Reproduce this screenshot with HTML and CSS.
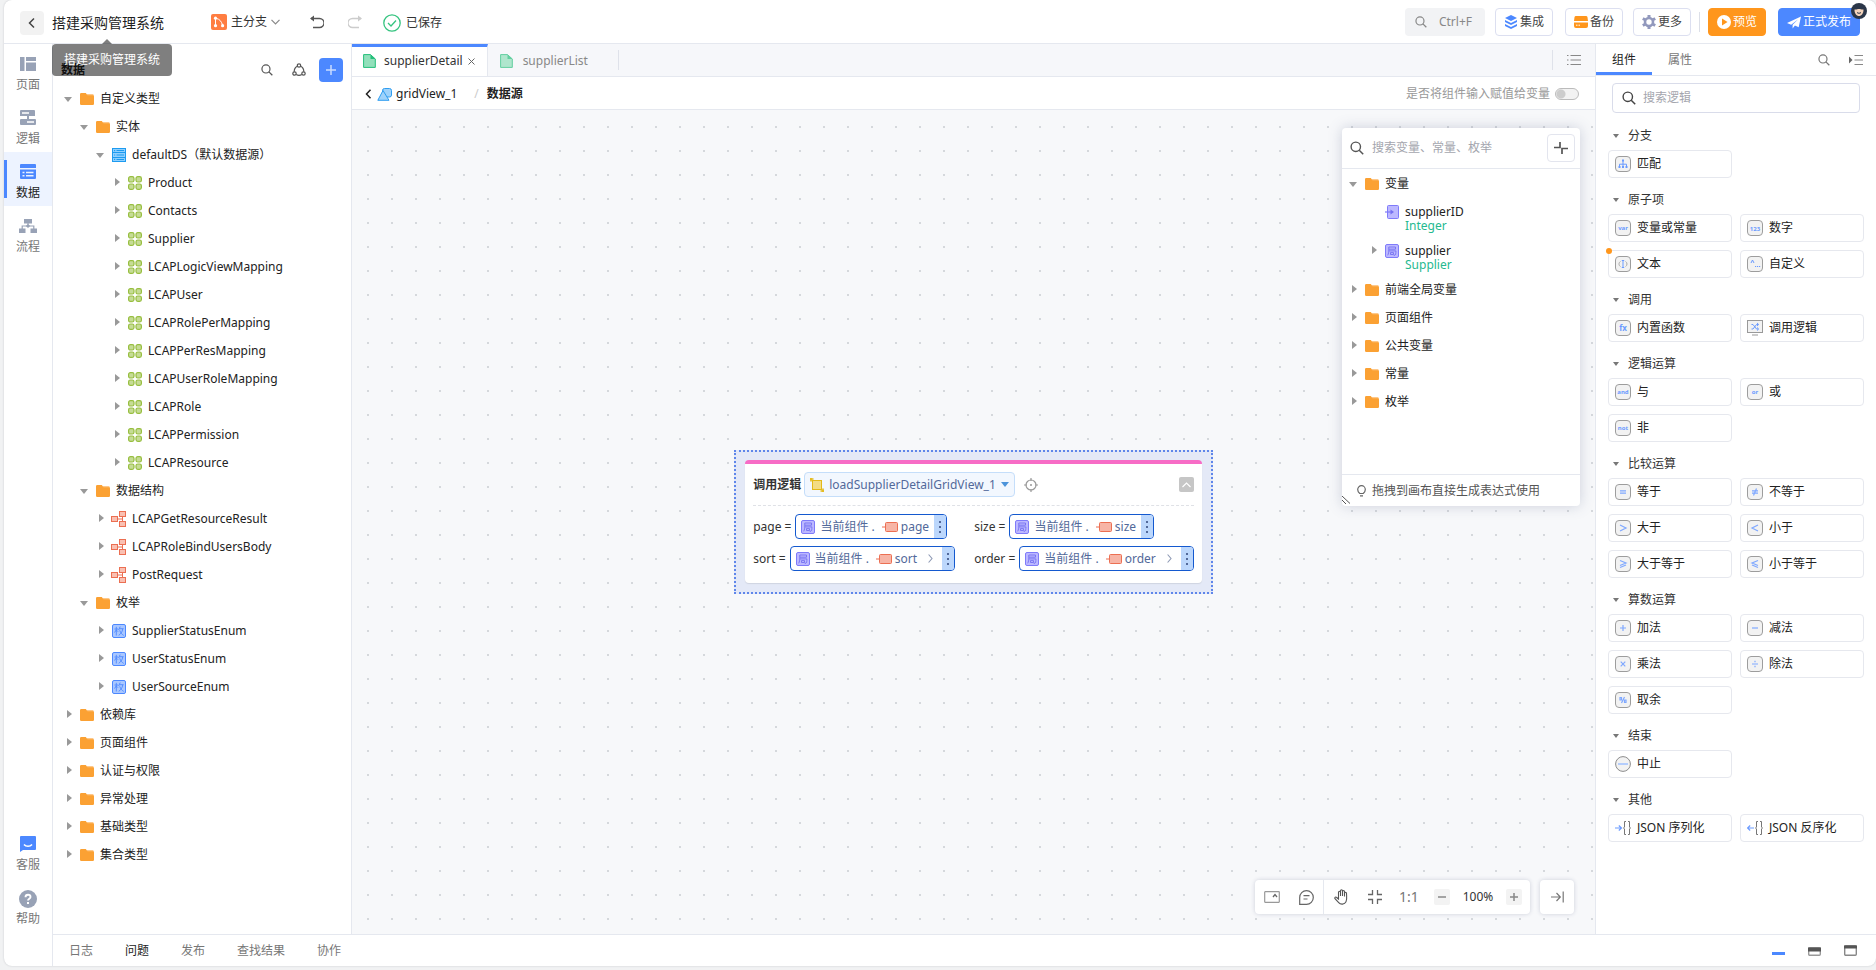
FILE: index.html
```html
<!DOCTYPE html>
<html lang="zh-CN">
<head>
<meta charset="utf-8">
<title>搭建采购管理系统</title>
<link rel="stylesheet" href="styles.css">
</head>
<body>
<svg class="defs" aria-hidden="true">
  <symbol id="folder" viewBox="0 0 14 14"><path d="M7 2h5.500a1.200 1.200 0 0 1 1.200 1.200V6H7z" fill="#fdc88a"/><path d="M0 2.200A1.200 1.200 0 0 1 1.200 1h4.600l1.700 2.200h5.300A1.200 1.200 0 0 1 14 4.400v7.400a1.200 1.200 0 0 1-1.200 1.200H1.200A1.200 1.200 0 0 1 0 11.800z" fill="#fba133"/></symbol>
  <symbol id="db" viewBox="0 0 14 14"><path d="M0 0h14v14H0z" fill="#8fd0ff"/><path d="M0 .5h14M0 4.500h14M0 9.500h14M0 13.500h14" stroke="#1d9bf0" stroke-width="1.200" fill="none"/><path d="M.5 0v14M13.500 0v14M4.500 2.500H12M4.500 7H12M4.500 11.500H12" stroke="#1d9bf0" fill="none"/><path d="M2 2h1.200v1.200H2zM2 6.400h1.200v1.200H2zM2 10.800h1.200V12H2z" fill="#1d9bf0"/></symbol>
  <symbol id="entity" viewBox="0 0 14 14"><g fill="#c6dc96" stroke="#97be3f" stroke-width="1.200"><rect x=".6" y=".6" width="5.400" height="5.400" rx="1.800"/><rect x="8" y=".6" width="5.400" height="5.400" rx="1.800"/><rect x=".6" y="8" width="5.400" height="5.400" rx="1.800"/><rect x="8" y="8" width="5.400" height="5.400" rx="1.800"/></g></symbol>
  <symbol id="struct" viewBox="0 0 16 16"><g fill="#f9c0b2" stroke="#ec6f52"><rect x=".5" y="5.500" width="6" height="5"/><rect x="8.500" y=".5" width="6" height="5"/><rect x="8.500" y="10.500" width="6" height="5"/><path d="M7 8h4.500M11.500 6v4" fill="none"/></g></symbol>
  <symbol id="enum" viewBox="0 0 14 14"><rect x=".5" y=".5" width="13" height="13" rx="1.500" fill="#a9c7ff" stroke="#4c88ff"/><path d="M2.500 5h3.500M4.300 2.800v8.700M4.200 6l-1.700 2.500M4.500 6.200L6 7.700M8.200 2.600L6.600 6M7.600 4.700h4M10.700 5c-.4 3-1.900 5-4 6.300M7.700 6.300c.8 2.300 2.200 4.200 4 5.100" fill="none" stroke="#4c88ff" stroke-width=".9"/></symbol>
  <symbol id="local" viewBox="0 0 14 14"><rect x=".5" y=".5" width="13" height="13" rx="1.500" fill="#bcb8ff" stroke="#7f7bfa"/><path d="M3.800 3h6.700v2.200H3.800zM3.800 5.200C3.800 8 3.500 10 2.700 11.300M4 6.900h6.900c0 2.500-.2 4-.9 4.300H8.700M5.500 8.600h3v1.900h-3z" fill="none" stroke="#7471f0" stroke-width=".9"/></symbol>
  <symbol id="input" viewBox="0 0 14 14"><rect x="2.500" y=".5" width="11" height="13" rx="1" fill="#bcb8ff" stroke="#7f7bfa"/><path d="M0 7h6" stroke="#7f7bfa" stroke-width="1.200"/><path d="M5.500 4.500L9 7 5.500 9.500z" fill="#7471f0"/></symbol>
  <symbol id="attr" viewBox="0 0 16 12"><path d="M0 6h4" stroke="#ec6f52"/><rect x="3.500" y="1.500" width="12" height="9" rx="1" fill="#f7b5a6" stroke="#ec6f52"/></symbol>
  <symbol id="file" viewBox="0 0 13 14"><path d="M1 .6h6.500L12.300 5v8.400H.6V.6z" fill="#92e0bb" stroke="#25bf7b"/><path d="M7.500.5V5h5z" fill="#25bf7b"/></symbol>
  <symbol id="search" viewBox="0 0 14 14"><circle cx="5.800" cy="5.800" r="4.700" fill="none" stroke="currentColor" stroke-width="1.400"/><path d="M9.200 9.200l4 4" stroke="currentColor" stroke-width="1.500"/></symbol>
  <symbol id="key" viewBox="0 0 16 16"><rect x=".5" y=".5" width="15" height="15" rx="3.500" fill="#f2f2f2" stroke="#9d9d9d"/></symbol>
</svg>

<div class="app">
  <header class="top">
    <button class="back" aria-label="返回"><svg width="8" height="12" viewBox="0 0 8 12"><path d="M6 1.500L1.500 6 6 10.500" fill="none" stroke="#444" stroke-width="1.500"/></svg></button>
    <h1 class="title">搭建采购管理系统<span class="tip" role="tooltip">搭建采购管理系统</span></h1>
    <button class="branch">
      <svg width="16" height="16" viewBox="0 0 16 16"><rect width="16" height="16" rx="2" fill="#ff7d41"/><path d="M4.500 4.500v7M4.500 4.500h1c3 .5 5 3 6 6.500" fill="none" stroke="#fff"/><g fill="#fff"><circle cx="4.500" cy="4.200" r="1.600"/><circle cx="4.500" cy="11.700" r="1.600"/><circle cx="11.600" cy="11.700" r="1.600"/></g></svg>
      主分支
      <svg width="9" height="6" viewBox="0 0 9 6"><path d="M.5.8l4 4 4-4" fill="none" stroke="#888" stroke-width="1.200"/></svg>
    </button>
    <div class="history">
      <button aria-label="撤销"><svg width="14" height="14" viewBox="0 0 14 14"><path d="M1 3.500h8.500a4.500 4.500 0 0 1 0 9H3" fill="none" stroke="#555" stroke-width="1.300"/><path d="M4 .5v6L0 3.500z" fill="#555"/></svg></button>
      <button aria-label="重做"><svg width="14" height="14" viewBox="0 0 14 14"><path d="M13 3.500H4.500a4.500 4.500 0 0 0 0 9H11" fill="none" stroke="#ccc" stroke-width="1.300"/><path d="M10 .5v6l4-3z" fill="#ccc"/></svg></button>
    </div>
    <p class="saved"><svg width="18" height="18" viewBox="0 0 18 18"><circle cx="9" cy="9" r="8.200" fill="none" stroke="#36c480" stroke-width="1.300"/><path d="M5 9l3 3 5-5.500" fill="none" stroke="#36c480" stroke-width="1.300"/></svg>已保存</p>
    <div class="actions">
      <button class="find"><svg width="12" height="12"><use href="#search"/></svg>Ctrl+F</button>
      <button class="act wide"><svg width="14" height="14" viewBox="0 0 14 14"><g fill="#4c88ff"><path d="M7 0l6 3-6 3-6-3z"/><path d="M1 5l6 3 6-3v2L7 10 1 7z"/><path d="M1 9l6 3 6-3v2l-6 3-6-3z"/></g></svg>集成</button>
      <button class="act"><svg width="14" height="14" viewBox="0 0 14 14"><path d="M2 1h10a1.500 1.500 0 0 1 1.500 1.200L14 6H0l.5-3.800A1.500 1.500 0 0 1 2 1zM0 7.500h14V11a2 2 0 0 1-2 2H2a2 2 0 0 1-2-2z" fill="#ff961c"/><path d="M2 10.200h1.500M4.500 10.200H6" stroke="#fff"/></svg>备份</button>
      <button class="act"><svg width="14" height="14" viewBox="0 0 14 14"><circle cx="7" cy="7" r="4" fill="none" stroke="#9299bd" stroke-width="2.600"/><g stroke="#9299bd" stroke-width="3"><path d="M7 0v2.500M7 11.500V14M.8 3.500L3 4.700M11 9.300l2.200 1.200M.8 10.500L3 9.300M11 4.700l2.200-1.200"/></g></svg>更多</button>
      <span class="bar"></span>
      <button class="act preview"><svg width="14" height="14" viewBox="0 0 14 14"><circle cx="7" cy="7" r="7" fill="#fff"/><path d="M5 3.500L10.500 7 5 10.500z" fill="#ff961c"/></svg>预览</button>
      <button class="act publish"><svg width="14" height="13" viewBox="0 0 15 13"><path d="M0 7L15 0l-2.500 11.500-4-1.700L6 13v-4L12 3 4.500 8.800z" fill="#fff"/></svg>正式发布
        <svg class="avatar" width="16" height="16" viewBox="0 0 16 16"><circle cx="8" cy="8" r="8" fill="#2b3648"/><path d="M3.500 6.500c2 .3 3-.6 4.500-.6s2.500.9 4.500.6C12.600 10.500 10.500 13 8 13s-4.600-2.500-4.500-6.500z" fill="#f3d3bb"/><path d="M6 9.500c1.200 1 2.800 1 4 0" stroke="#2b3648" fill="none"/></svg>
      </button>
    </div>
  </header>

  <div class="main">
    <nav class="rail">
      <button><svg width="16" height="16" viewBox="0 0 16 16"><path d="M0 1h4.500v14H0zM6 1h10v4H6zM6 6.500h10V15H6z" fill="#98a2b6"/></svg>页面</button>
      <button><svg width="18" height="16" viewBox="0 0 18 16"><path d="M2 0h13a1 1 0 0 1 1 1v5H1V1a1 1 0 0 1 1-1zM2 9h14a1 1 0 0 1 1 1v4a1 1 0 0 1-1 1H2a1 1 0 0 1-1-1v-4a1 1 0 0 1 1-1z" fill="#98a2b6"/><path d="M3 3h7M8 12h7" stroke="#fff" stroke-width="1.500"/><path d="M9 6v3" stroke="#98a2b6" stroke-width="2"/></svg>逻辑</button>
      <button class="on"><svg width="16" height="16" viewBox="0 0 16 16"><path d="M1 0h14a1 1 0 0 1 1 1v3H0V1a1 1 0 0 1 1-1zM0 5.500h16V14a1 1 0 0 1-1 1H1a1 1 0 0 1-1-1z" fill="#4c88ff"/><path d="M2.500 8.500h2M6 8.500h7.500M2.500 11.800h2M6 11.800h7.500" stroke="#eaf1ff" stroke-width="1.600"/></svg>数据</button>
      <button><svg width="18" height="16" viewBox="0 0 18 16"><path d="M5 1h8v4.500H5zM0 10.500h6.500V15H0zM11.500 10.500H18V15h-6.500z" fill="#98a2b6"/><path d="M9 5v4M3.200 11V8h11.600v3" fill="none" stroke="#98a2b6" stroke-width="1.200"/><path d="M9 6l2.200 2L9 10 6.800 8z" fill="#98a2b6"/></svg>流程</button>
      <span class="grow"></span>
      <button><svg width="16" height="16" viewBox="0 0 16 16"><path d="M1 0h14a1 1 0 0 1 1 1v12a1 1 0 0 1-1 1H3l-3 2V1a1 1 0 0 1 1-1z" fill="#4c88ff"/><path d="M4 8.500c2 2.400 6 2.400 8 0" fill="none" stroke="#fff" stroke-width="1.600"/></svg>客服</button>
      <button><svg width="18" height="18" viewBox="0 0 18 18"><circle cx="9" cy="9" r="9" fill="#98a2b6"/><path d="M6.500 7.200C6.500 3.800 11.500 4 11.500 7c0 1.700-2.500 1.800-2.500 3.600" fill="none" stroke="#fff" stroke-width="1.900"/><path d="M8 12h2v2H8z" fill="#fff"/></svg>帮助</button>
    </nav>

    <div class="work">
      <div class="cols">
        <aside class="tree-panel">
          <div class="tree-head">
            <h2>数据</h2>
            <button aria-label="搜索"><svg width="12" height="12"><use href="#search"/></svg></button>
            <button aria-label="引用关系"><svg width="14" height="14" viewBox="0 0 14 14"><g fill="none" stroke="#555" stroke-width="1.200"><circle cx="7" cy="2.500" r="1.700"/><circle cx="2.500" cy="10.500" r="1.700"/><circle cx="11.500" cy="10.500" r="1.700"/><path d="M5.300 3.200C3.300 4.200 2.200 6 2.200 8.700M8.700 3.200c2 1 3.100 2.800 3.100 5.500M4.200 11.500c1.700 1 3.900 1 5.600 0"/></g></svg></button>
            <button class="add" aria-label="新增"><svg width="10" height="10" viewBox="0 0 10 10"><path d="M5 0v10M0 5h10" stroke="#c9dbff" stroke-width="1.500"/></svg></button>
          </div>
          <div class="tree">
            <button class="node l0"><i class="open"></i><svg><use href="#folder"/></svg>自定义类型</button>
            <button class="node l1"><i class="open"></i><svg><use href="#folder"/></svg>实体</button>
            <button class="node l2"><i class="open"></i><svg><use href="#db"/></svg>defaultDS（默认数据源）</button>
            <button class="node l3"><i class="shut"></i><svg><use href="#entity"/></svg>Product</button>
            <button class="node l3"><i class="shut"></i><svg><use href="#entity"/></svg>Contacts</button>
            <button class="node l3"><i class="shut"></i><svg><use href="#entity"/></svg>Supplier</button>
            <button class="node l3"><i class="shut"></i><svg><use href="#entity"/></svg>LCAPLogicViewMapping</button>
            <button class="node l3"><i class="shut"></i><svg><use href="#entity"/></svg>LCAPUser</button>
            <button class="node l3"><i class="shut"></i><svg><use href="#entity"/></svg>LCAPRolePerMapping</button>
            <button class="node l3"><i class="shut"></i><svg><use href="#entity"/></svg>LCAPPerResMapping</button>
            <button class="node l3"><i class="shut"></i><svg><use href="#entity"/></svg>LCAPUserRoleMapping</button>
            <button class="node l3"><i class="shut"></i><svg><use href="#entity"/></svg>LCAPRole</button>
            <button class="node l3"><i class="shut"></i><svg><use href="#entity"/></svg>LCAPPermission</button>
            <button class="node l3"><i class="shut"></i><svg><use href="#entity"/></svg>LCAPResource</button>
            <button class="node l1"><i class="open"></i><svg><use href="#folder"/></svg>数据结构</button>
            <button class="node l2"><i class="shut"></i><svg class="tall"><use href="#struct"/></svg>LCAPGetResourceResult</button>
            <button class="node l2"><i class="shut"></i><svg class="tall"><use href="#struct"/></svg>LCAPRoleBindUsersBody</button>
            <button class="node l2"><i class="shut"></i><svg class="tall"><use href="#struct"/></svg>PostRequest</button>
            <button class="node l1"><i class="open"></i><svg><use href="#folder"/></svg>枚举</button>
            <button class="node l2"><i class="shut"></i><svg><use href="#enum"/></svg>SupplierStatusEnum</button>
            <button class="node l2"><i class="shut"></i><svg><use href="#enum"/></svg>UserStatusEnum</button>
            <button class="node l2"><i class="shut"></i><svg><use href="#enum"/></svg>UserSourceEnum</button>
            <button class="node l0"><i class="shut"></i><svg><use href="#folder"/></svg>依赖库</button>
            <button class="node l0"><i class="shut"></i><svg><use href="#folder"/></svg>页面组件</button>
            <button class="node l0"><i class="shut"></i><svg><use href="#folder"/></svg>认证与权限</button>
            <button class="node l0"><i class="shut"></i><svg><use href="#folder"/></svg>异常处理</button>
            <button class="node l0"><i class="shut"></i><svg><use href="#folder"/></svg>基础类型</button>
            <button class="node l0"><i class="shut"></i><svg><use href="#folder"/></svg>集合类型</button>
          </div>
        </aside>

        <main class="editor">
          <div class="tabs">
            <button class="tab current"><svg width="13" height="14"><use href="#file"/></svg><span>supplierDetail</span><svg class="close" width="7" height="7" viewBox="0 0 7 7"><path d="M.5.5l6 6M6.500.5l-6 6" stroke="#666"/></svg></button>
            <button class="tab"><svg width="13" height="14"><use href="#file"/></svg><span>supplierList</span></button>
            <span class="sep"></span>
            <span class="grow"></span>
            <span class="sep"></span>
            <button class="list" aria-label="标签列表"><svg width="14" height="12" viewBox="0 0 14 12"><path d="M3.500 1.500H14M3.500 6H14M3.500 10.500H14M0 1.500h1.500M0 6h1.500M0 10.500h1.500" stroke="#888" stroke-width="1.200"/></svg></button>
          </div>
          <div class="crumbs">
            <button aria-label="返回"><svg width="7" height="10" viewBox="0 0 7 10"><path d="M5.500.8L1.500 5l4 4.200" fill="none" stroke="#222" stroke-width="1.500"/></svg></button>
            <a href="#grid"><svg width="15" height="14" viewBox="0 0 15 14"><rect x="5.500" y="1.500" width="9" height="8.500" rx="2" fill="#9ed2fb" stroke="#2f9df0"/><path d="M6 3.500L12 13.300H.8z" fill="#9ed2fb" stroke="#2f9df0"/></svg>gridView_1</a>
            <span class="slash">/</span>
            <strong>数据源</strong>
            <label class="assign">是否将组件输入赋值给变量<input type="checkbox" role="switch"></label>
          </div>
          <div class="canvas">
            <section class="block">
              <div class="card">
                <div class="card-head">
                  <strong>调用逻辑</strong>
                  <button class="pick"><svg width="14" height="14" viewBox="0 0 14 14"><rect x="2.500" y="2.500" width="9" height="9" fill="#f3dc84" stroke="#e3b919"/><path d="M0 1h3.500M1 0v3.500M10.500 13H14M13 10.500V14" stroke="#e3b919" stroke-width="1.600"/></svg>loadSupplierDetailGridView_1<i class="drop"></i></button>
                  <button aria-label="定位"><svg width="14" height="14" viewBox="0 0 14 14"><circle cx="7" cy="7" r="5" fill="none" stroke="#999" stroke-width="1.200"/><path d="M7 0v3M7 11v3M0 7h3M11 7h3" stroke="#999" stroke-width="1.200"/><circle cx="7" cy="7" r="1" fill="#999"/></svg></button>
                  <button class="fold" aria-label="收起"><svg width="9" height="6" viewBox="0 0 9 6"><path d="M.5 5l4-4 4 4" fill="none" stroke="#fff" stroke-width="1.200"/></svg></button>
                </div>
                <div class="params">
                  <div class="param">page = <button class="pill"><svg width="14" height="14"><use href="#local"/></svg><span>当前组件 .</span><svg width="16" height="12"><use href="#attr"/></svg><b>page</b><em></em></button></div>
                  <div class="param">size = <button class="pill"><svg width="14" height="14"><use href="#local"/></svg><span>当前组件 .</span><svg width="16" height="12"><use href="#attr"/></svg><b>size</b><em></em></button></div>
                  <div class="param">sort = <button class="pill"><svg width="14" height="14"><use href="#local"/></svg><span>当前组件 .</span><svg width="16" height="12"><use href="#attr"/></svg><b>sort</b><svg class="next" width="5" height="9" viewBox="0 0 5 9"><path d="M.6.5l3.400 4-3.400 4" fill="none" stroke="#8e9ab5" stroke-width="1.100"/></svg><em></em></button></div>
                  <div class="param">order = <button class="pill"><svg width="14" height="14"><use href="#local"/></svg><span>当前组件 .</span><svg width="16" height="12"><use href="#attr"/></svg><b>order</b><svg class="next" width="5" height="9" viewBox="0 0 5 9"><path d="M.6.5l3.400 4-3.400 4" fill="none" stroke="#8e9ab5" stroke-width="1.100"/></svg><em></em></button></div>
                </div>
              </div>
            </section>

            <section class="vars">
              <div class="vars-head">
                <svg width="14" height="14"><use href="#search"/></svg>
                <input type="text" aria-label="搜索变量" placeholder="搜索变量、常量、枚举">
                <button aria-label="收缩"><svg width="14" height="14" viewBox="0 0 14 14"><path d="M0 6.500h6V1M8 13V7.500h6" fill="none" stroke="#555" stroke-width="1.700"/></svg></button>
              </div>
              <div class="vars-tree">
                <button class="node"><i class="open"></i><svg><use href="#folder"/></svg>变量</button>
                <button class="node two"><i></i><svg><use href="#input"/></svg><span>supplierID<small>Integer</small></span></button>
                <button class="node two"><i class="shut"></i><svg><use href="#local"/></svg><span>supplier<small>Supplier</small></span></button>
                <button class="node"><i class="shut"></i><svg><use href="#folder"/></svg>前端全局变量</button>
                <button class="node"><i class="shut"></i><svg><use href="#folder"/></svg>页面组件</button>
                <button class="node"><i class="shut"></i><svg><use href="#folder"/></svg>公共变量</button>
                <button class="node"><i class="shut"></i><svg><use href="#folder"/></svg>常量</button>
                <button class="node"><i class="shut"></i><svg><use href="#folder"/></svg>枚举</button>
              </div>
              <p class="vars-foot"><svg width="9" height="12" viewBox="0 0 9 12"><path d="M2.800 8.500C1.500 7.500.7 6.500.7 4.500a3.800 3.800 0 0 1 7.600 0c0 2-.8 3-2.100 4zM3 10.800h3" fill="none" stroke="#666" stroke-width="1.200"/></svg>拖拽到画布直接生成表达式使用</p>
              <svg class="grip" width="8" height="8" viewBox="0 0 8 8"><path d="M0 0l8 7.500M0 4l4 4" stroke="#555"/></svg>
            </section>

            <div class="tools">
              <div class="tool-group">
                <button aria-label="缩略图"><svg width="16" height="12" viewBox="0 0 16 12"><rect x=".7" y=".7" width="14.600" height="10.600" rx=".5" fill="none" stroke="#999" stroke-width="1.200"/><path d="M9 6l2-2.500L13 6" fill="none" stroke="#666" stroke-width="1.300"/></svg></button>
                <button class="split" aria-label="评论"><svg width="15" height="15" viewBox="0 0 15 15"><path d="M.7 14.300V7.500A6.800 6.800 0 1 1 7.500 14.300zM4.500 5.700h6M4.500 9h4" fill="none" stroke="#666" stroke-width="1.200"/></svg></button>
                <button aria-label="拖动"><svg width="15" height="16" viewBox="0 0 15 16"><path d="M4.500 10V3.300a1 1 0 0 1 2 0V7 1.700a1 1 0 0 1 2 0V7 2.500a1 1 0 0 1 2 0v5-3.200a1 1 0 0 1 2 0c0 3 .8 6-.5 8.500-1.400 2.900-5.500 3-7.300.8L1 9.700c-.8-1.500.9-2.100 1.700-1.200z" fill="none" stroke="#555" stroke-width="1.100"/></svg></button>
                <button aria-label="适应画布"><svg width="14" height="14" viewBox="0 0 14 14"><path d="M0 4.500h4.500V0M9.500 0v4.500H14M0 9.500h4.500V14M9.500 14V9.500H14" fill="none" stroke="#666" stroke-width="1.300"/></svg></button>
                <button class="ratio">1:1</button>
                <button class="step" aria-label="缩小"><svg width="8" height="8" viewBox="0 0 8 8"><path d="M0 4h8" stroke="#888" stroke-width="1.500"/></svg></button>
                <output>100%</output>
                <button class="step" aria-label="放大"><svg width="8" height="8" viewBox="0 0 8 8"><path d="M0 4h8M4 0v8" stroke="#888" stroke-width="1.500"/></svg></button>
              </div>
              <div class="tool-group">
                <button aria-label="收起工具"><svg width="13" height="12" viewBox="0 0 13 12"><path d="M0 6h9M5.500 2L9.300 6l-3.800 4M12.200.5v11" fill="none" stroke="#777" stroke-width="1.200"/></svg></button>
              </div>
            </div>
          </div>
        </main>

        <aside class="parts">
          <div class="parts-tabs">
            <button class="on">组件</button>
            <button>属性</button>
            <span class="grow"></span>
            <button class="ico" aria-label="搜索"><svg width="12" height="12"><use href="#search"/></svg></button>
            <button class="ico" aria-label="收起面板"><svg width="14" height="12" viewBox="0 0 14 12"><path d="M5.500 1.500H14M5.500 6H14M5.500 10.500H14" stroke="#888" stroke-width="1.200"/><path d="M0 2.500v7L3.500 6z" fill="#666"/></svg></button>
          </div>
          <label class="parts-search"><svg width="14" height="14"><use href="#search"/></svg><input type="text" aria-label="搜索逻辑" placeholder="搜索逻辑"></label>

          <section class="group"><h3><i class="mini"></i>分支</h3><div class="items">
            <button><svg viewBox="0 0 16 16"><use href="#key"/><path d="M8 4.500V10M4.500 11V8.200h7V11" fill="none" stroke="#6b9bff"/><path d="M7 3.500h2v2H7zM3.500 10h2v2h-2zM7 10h2v2H7zM10.500 10h2v2h-2z" fill="#6b9bff"/></svg>匹配</button>
          </div></section>
          <section class="group"><h3><i class="mini"></i>原子项</h3><div class="items">
            <button><svg viewBox="0 0 16 16"><use href="#key"/><text x="8" y="10">var</text></svg>变量或常量</button>
            <button><svg viewBox="0 0 16 16"><use href="#key"/><text x="8" y="10.500">123</text></svg>数字</button>
            <button class="dot"><svg viewBox="0 0 16 16"><use href="#key"/><path d="M5.500 5.500C3.500 6.500 3.500 9.500 5.500 10.500M10.500 5.500c2 1 2 4 0 5" fill="none" stroke="#aaa"/><path d="M8 4.500v7M6.800 4.500h2.400M6.800 11.500h2.400" stroke="#6b9bff"/></svg>文本</button>
            <button><svg viewBox="0 0 16 16"><use href="#key"/><path d="M4 7l1.500-3L7 7" fill="none" stroke="#6b9bff"/><path d="M8 10.500h1.200M10 10.500h1.200M12 10.500h1.200" stroke="#6b9bff"/></svg>自定义</button>
          </div></section>
          <section class="group"><h3><i class="mini"></i>调用</h3><div class="items">
            <button><svg viewBox="0 0 16 16"><use href="#key"/><text class="big" x="8" y="11">fx</text></svg>内置函数</button>
            <button><svg viewBox="0 0 16 16"><rect x=".5" y=".5" width="15" height="12" fill="#f2f2f2" stroke="#999"/><path d="M5 15h6" stroke="#bbb" stroke-width="1.500"/><path d="M4.500 4.500h1.500l3.500 4.500H11M4.500 9H6l3.500-4.500H11M10 3l1.700 1.500L10 6M10 7.500L11.700 9 10 10.500" fill="none" stroke="#6b9bff"/></svg>调用逻辑</button>
          </div></section>
          <section class="group"><h3><i class="mini"></i>逻辑运算</h3><div class="items">
            <button><svg viewBox="0 0 16 16"><use href="#key"/><text x="8" y="10">and</text></svg>与</button>
            <button><svg viewBox="0 0 16 16"><use href="#key"/><text x="8" y="10">or</text></svg>或</button>
            <button><svg viewBox="0 0 16 16"><use href="#key"/><text x="8" y="10">not</text></svg>非</button>
          </div></section>
          <section class="group"><h3><i class="mini"></i>比较运算</h3><div class="items">
            <button><svg class="op" viewBox="0 0 16 16"><use href="#key"/><path d="M5 6.800h6M5 9.200h6"/></svg>等于</button>
            <button><svg class="op" viewBox="0 0 16 16"><use href="#key"/><path d="M5 6.800h6M5 9.200h6M9.500 4.500l-3 7"/></svg>不等于</button>
            <button><svg class="op" viewBox="0 0 16 16"><use href="#key"/><path d="M5 5l6 3-6 3"/></svg>大于</button>
            <button><svg class="op" viewBox="0 0 16 16"><use href="#key"/><path d="M11 5L5 8l6 3"/></svg>小于</button>
            <button><svg class="op" viewBox="0 0 16 16"><use href="#key"/><path d="M5 4.500L11 7 5 9.500M5 11.500l6-2.500"/></svg>大于等于</button>
            <button><svg class="op" viewBox="0 0 16 16"><use href="#key"/><path d="M11 4.500L5 7l6 2.500M11 11.500L5 9"/></svg>小于等于</button>
          </div></section>
          <section class="group"><h3><i class="mini"></i>算数运算</h3><div class="items">
            <button><svg class="op" viewBox="0 0 16 16"><use href="#key"/><path d="M5 8h6M8 5v6"/></svg>加法</button>
            <button><svg class="op" viewBox="0 0 16 16"><use href="#key"/><path d="M5 8h6"/></svg>减法</button>
            <button><svg class="op" viewBox="0 0 16 16"><use href="#key"/><path d="M5.700 5.700l4.600 4.600M10.300 5.700l-4.600 4.600"/></svg>乘法</button>
            <button><svg class="op" viewBox="0 0 16 16"><use href="#key"/><path d="M5 8h6M8 4.700v1.500M8 9.800v1.500"/></svg>除法</button>
            <button><svg class="op" viewBox="0 0 16 16"><use href="#key"/><path d="M9.500 5l-3 6M5 5.500h1.500V8H5zM9.500 8H11v2.500H9.500z"/></svg>取余</button>
          </div></section>
          <section class="group"><h3><i class="mini"></i>结束</h3><div class="items">
            <button><svg viewBox="0 0 16 16"><circle cx="8" cy="8" r="7.400" fill="#f2f2f2" stroke="#8c8c8c"/><path d="M3 8h10" stroke="#9fc0ff" stroke-width="1.500"/></svg>中止</button>
          </div></section>
          <section class="group"><h3><i class="mini"></i>其他</h3><div class="items">
            <button><svg viewBox="0 0 16 16"><path d="M0 8h6M3.800 5.500L6.500 8l-2.700 2.500" fill="none" stroke="#6b9bff" stroke-width="1.200"/><path d="M11 1.500H9.500v5.500L8.500 8l1 1v5.500H11M13 1.500h1.500v5.500l1 1-1 1v5.500H13" fill="none" stroke="#777"/></svg>JSON 序列化</button>
            <button><svg viewBox="0 0 16 16"><path d="M7 8H.8M3.200 5.500L.5 8l2.700 2.500" fill="none" stroke="#6b9bff" stroke-width="1.200"/><path d="M11 1.500H9.500v5.500L8.500 8l1 1v5.500H11M13 1.500h1.500v5.500l1 1-1 1v5.500H13" fill="none" stroke="#777"/></svg>JSON 反序化</button>
          </div></section>
        </aside>
      </div>

      <footer class="bottom">
        <button>日志</button>
        <button class="on">问题</button>
        <button>发布</button>
        <button>查找结果</button>
        <button>协作</button>
        <span class="grow"></span>
        <button class="win" aria-label="最小化"><svg width="13" height="12" viewBox="0 0 13 12"><path d="M0 8.500h13" stroke="#4c88ff" stroke-width="3"/></svg></button>
        <button class="win" aria-label="半屏"><svg width="13" height="12" viewBox="0 0 13 12"><rect x=".7" y="2.700" width="11.600" height="7.600" rx="1" fill="#fff" stroke="#999" stroke-width="1.400"/><path d="M0 4.500h13" stroke="#555" stroke-width="4"/></svg></button>
        <button class="win" aria-label="最大化"><svg width="13" height="12" viewBox="0 0 13 12"><rect x=".7" y=".7" width="11.600" height="9.600" rx="1" fill="#fff" stroke="#888" stroke-width="1.400"/><path d="M0 2h13" stroke="#555" stroke-width="3"/></svg></button>
      </footer>
    </div>
  </div>
</div>
</body>
</html>
```

FILE: styles.css
```css
* { box-sizing: border-box; margin: 0; padding: 0; }

body {
  height: 100vh;
  padding: 0 0 4px 4px;
  background: #f1f2f3;
  color: #333;
  font: 12px/16px "Noto Sans", "Noto Sans CJK SC", sans-serif;
}

button, input {
  border: 0;
  background: none;
  color: inherit;
  font: inherit;
}

button { display: flex; align-items: center; white-space: nowrap; cursor: pointer; }
svg { flex: none; display: block; }
i, em { font-style: normal; }
a { color: inherit; text-decoration: none; }
.defs { position: absolute; width: 0; height: 0; }
.grow { flex: 1; }

.app {
  display: flex;
  flex-direction: column;
  height: 100%;
  border-radius: 8px;
  background: #fff;
  box-shadow: 0 0 2px #c4c6ca;
}

/* Header */
.top {
  display: flex;
  align-items: center;
  flex: none;
  height: 44px;
  padding: 1px 16px 0;
  border-bottom: 1px solid #e5e8ef;
}
.back { justify-content: center; width: 24px; height: 24px; margin: 2px 8px 0 0; border-radius: 4px; background: #f2f2f2; }
.title { position: relative; margin-top: 2px; color: #222; font-size: 14px; font-weight: 400; line-height: 20px; }
.tip {
  position: absolute;
  z-index: 5;
  top: 31px;
  left: 0;
  padding: 8px 12px;
  border-radius: 4px;
  background: rgba(0, 0, 0, .5);
  color: #fff;
  font-size: 12px;
  line-height: 16px;
  white-space: nowrap;
}
.tip::before {
  content: "";
  position: absolute;
  left: 50%;
  bottom: 100%;
  margin-left: -10px;
  border: 5px solid transparent;
  border-top: 0;
  border-bottom-color: rgba(0, 0, 0, .5);
}
.branch { gap: 4px; margin-left: 47px; }
.history { display: flex; gap: 24px; margin-left: 30px; }
.saved { display: flex; align-items: center; gap: 5px; margin: 2px 0 0 21px; }
.actions { display: flex; align-items: center; gap: 10px; margin-left: auto; }
.find { gap: 12px; width: 80px; height: 28px; padding-left: 10px; border-radius: 4px; background: #f2f3f5; color: #888; }
.act { justify-content: center; gap: 2px; height: 28px; padding: 0 8px; border: 1px solid #dcdff0; border-radius: 4px; color: #444; }
.wide { margin-right: 2px; }
.bar { width: 1px; height: 20px; margin: 0 -2px; background: #dcdfe8; }
.preview { border-color: #ff961c; background: #ff961c; color: #fff; }
.publish { position: relative; margin-left: 2px; border-color: #4c88ff; background: #4c88ff; color: #fff; }
.avatar { position: absolute; top: -6px; right: -8px; }

/* Left rail */
.main { display: flex; flex: 1; min-height: 0; }
.rail { display: flex; flex-direction: column; flex: none; width: 49px; padding-bottom: 34px; border-right: 1px solid #e5e8ef; color: #777; }
.rail button { flex-direction: column; justify-content: space-between; height: 54px; padding: 12px 3px 5px 0; border-left: 3px solid transparent; }
.rail .on { background: #edf3ff linear-gradient(#4c88ff, #4c88ff) left / 3px 38px no-repeat; background-origin: border-box; color: #222; }

.work { display: flex; flex-direction: column; flex: 1; min-width: 0; }
.cols { display: flex; flex: 1; min-height: 0; }

/* Tree */
.tree-panel { flex: none; width: 299px; border-right: 1px solid #e5e8ef; overflow: hidden; }
.tree-head { display: flex; align-items: center; gap: 19px; height: 41px; padding: 10px 8px 0; color: #555; }
.tree-head h2 { flex: 1; color: #222; font-size: 12px; }
.tree-head .add { justify-content: center; width: 24px; height: 24px; margin-left: -6px; border-radius: 4px; background: #4c88ff; }
.node { gap: 6px; width: 100%; height: 28px; padding-left: 9px; color: #222; text-align: left; }
.node i { display: flex; justify-content: center; flex: none; width: 12px; }
.node svg { width: 14px; height: 14px; }
.node .tall { width: 16px; height: 16px; margin: 0 -1px; }
.l1 { padding-left: 25px; }
.l2 { padding-left: 41px; }
.l3 { padding-left: 57px; }
.open::before { content: ""; border: 4px solid transparent; border-top: 5px solid #999; border-bottom: 0; }
.shut::before { content: ""; margin: -2px 0 0 2px; border: 4px solid transparent; border-left: 5px solid #999; border-right: 0; }

/* Editor */
.editor { display: flex; flex-direction: column; flex: 1; min-width: 0; border-right: 1px solid #e5e8ef; }
.tabs { display: flex; align-items: center; flex: none; height: 33px; border-bottom: 1px solid #e5e8ef; background: #f6f7fa; }
.tab { gap: 10px; align-self: stretch; padding: 2px 30px 0 12px; color: #888; }
.tab.current { gap: 8px; padding: 0 11px 1px; border-top: 3px solid #4c88ff; border-right: 1px solid #e5e8ef; background: #fff; color: #333; }
.tab:not(.current) svg { opacity: .7; }
.close { margin: 0 1px 0 -3px; }
.sep { width: 1px; height: 20px; background: #dfe2ea; }
.list { padding: 0 14px; }
.crumbs { display: flex; align-items: center; flex: none; height: 33px; padding: 1px 16px 0 13px; border-bottom: 1px solid #e5e8ef; color: #222; }
.crumbs a { display: flex; align-items: center; gap: 4px; margin-left: 5px; }
.slash { margin: 0 8px 0 17px; color: #ccc; }
.assign { display: flex; align-items: center; gap: 5px; margin-left: auto; color: #999; }
.assign input { appearance: none; width: 24px; height: 12px; border: 1px solid #bbb; border-radius: 6px; background: radial-gradient(circle at 5px 5px, #ccc 4px, #f2f2f2 5px); }

.canvas {
  position: relative;
  display: flex;
  align-items: center;
  justify-content: center;
  flex: 1;
  background: #f7f8fa conic-gradient(from 270deg at 2px 2px, #d5d8dc 90deg, transparent 0) 15px 16px / 24px 24px;
}
.block { padding: 8px 9px 9px; border: 2px dotted #5f86ea; background: #e4e9f7; }
.card { padding: 8px 8px 12px; border-top: 4px solid #f76cc6; border-radius: 4px; background: #fff; box-shadow: 0 1px 1px #cfd4e0; }
.card-head { display: flex; align-items: center; gap: 3px; height: 34px; padding-bottom: 8px; border-bottom: 1px dashed #dfe1e6; }
.pick { gap: 5px; height: 25px; padding: 0 5px; margin-right: 6px; border: 1px solid #c5defa; border-radius: 4px; background: #f2f7fe; color: #52699a; }
.drop { border: 4px solid transparent; border-top: 5px solid #4c93da; border-bottom: 0; }
.fold { justify-content: center; width: 15px; height: 15px; margin-left: auto; border-radius: 2px; background: #c6c6c6; }
.params { display: grid; grid-template-columns: 221px auto; gap: 7px 0; padding-top: 8px; }
.param { display: flex; align-items: center; gap: 4px; }
.pill { gap: 5px; height: 25px; padding-left: 5px; border: 1px solid #1459cf; border-radius: 4px; color: #52699a; overflow: hidden; }
.pill span { margin-right: 2px; }
.pill b { margin-left: -2px; font-weight: 400; }
.pill .next { margin: 0 4px 0 6px; }
.pill em { display: flex; align-items: center; justify-content: center; align-self: stretch; width: 12px; background: #bcd7fc; }
.pill em::before { content: ""; width: 2px; height: 2px; background: #52699a; box-shadow: 0 -5px #52699a, 0 5px #52699a; }

/* Variables panel */
.vars { position: absolute; top: 18px; right: 15px; display: flex; flex-direction: column; width: 238px; height: 378px; border-radius: 4px; background: #fff; box-shadow: 0 0 14px rgba(80, 90, 130, .25); }
.vars-head { display: flex; align-items: center; gap: 8px; height: 41px; padding: 0 5px 0 8px; border-bottom: 1px solid #e5e8ef; color: #555; }
.vars-head input { flex: 1; min-width: 0; }
.vars-head button { justify-content: center; width: 28px; height: 28px; border: 1px solid #e3e5ee; border-radius: 4px; }
.vars-tree { flex: 1; padding-top: 1px; }
.vars-tree .node { padding-left: 5px; }
.vars-tree .two { align-items: flex-start; height: 39px; padding: 7px 0 0 25px; }
.two span { line-height: 14px; }
.two i { margin-top: 4px; }
small { display: block; color: #26b990; font-size: 12px; }
.vars-foot { display: flex; align-items: center; gap: 6px; height: 32px; padding-left: 15px; border-top: 1px solid #e5e8ef; color: #555; }
.grip { position: absolute; left: 0; bottom: 2px; }
::placeholder { color: #a4a6ae; opacity: 1; }

/* Canvas tools */
.tools { position: absolute; right: 21px; bottom: 20px; display: flex; gap: 10px; }
.tool-group { display: flex; align-items: center; height: 34px; border-radius: 4px; background: #fff; box-shadow: 0 0 4px rgba(60, 70, 110, .22); }
.tool-group button { justify-content: center; width: 34px; height: 34px; }
.tool-group .split { width: 35px; border-right: 1px solid #e5e8ef; }
.tool-group .ratio { color: #777; font-size: 14px; }
.tool-group .step { width: 16px; height: 16px; margin: 0 8px; border-radius: 2px; background: #f3f3f3; }
output { width: 40px; text-align: center; }

/* Component palette */
.parts { flex: none; width: 280px; overflow: hidden; }
.parts-tabs { display: flex; height: 32px; padding-right: 13px; border-bottom: 1px solid #e5e8ef; color: #777; }
.parts-tabs button { padding: 1px 16px 0; border-bottom: 3px solid transparent; border-top: 3px solid transparent; }
.parts-tabs .on { border-bottom-color: #4c88ff; color: #222; }
.parts-tabs .ico { padding: 0; margin-left: 19px; }
.parts-search { display: flex; align-items: center; gap: 7px; height: 30px; margin: 7px 16px 9px; padding: 0 9px; border: 1px solid #d9dcea; border-radius: 4px; color: #444; }
.parts-search input { flex: 1; min-width: 0; }
.group h3 { display: flex; align-items: center; gap: 9px; height: 28px; padding-left: 17px; font-size: 12px; font-weight: 400; }
.mini { border: 3px solid transparent; border-top: 4px solid #777; border-bottom: 0; }
.items { display: grid; grid-template-columns: 1fr 1fr; gap: 8px; padding: 0 12px 8px; }
.items button { position: relative; gap: 6px; height: 28px; padding-left: 6px; border: 1px solid #e6e8ee; border-radius: 4px; color: #222; }
.items svg { width: 16px; height: 16px; }
.items text { fill: #6b9bff; font: 700 6px "Noto Sans", sans-serif; text-anchor: middle; }
.items .big { font-size: 8px; }
.op path { fill: none; stroke: #7fa8ff; stroke-width: 1.2; }
.dot::before { content: ""; position: absolute; top: -3px; left: -3px; width: 6px; height: 6px; border-radius: 50%; background: #ff961c; }

/* Bottom bar */
.bottom { display: flex; align-items: center; flex: none; gap: 32px; height: 32px; padding: 1px 19px 0 16px; border-top: 1px solid #e5e8ef; color: #777; }
.bottom .on { color: #222; }
.bottom .win + .win { margin-left: -9px; }
```
